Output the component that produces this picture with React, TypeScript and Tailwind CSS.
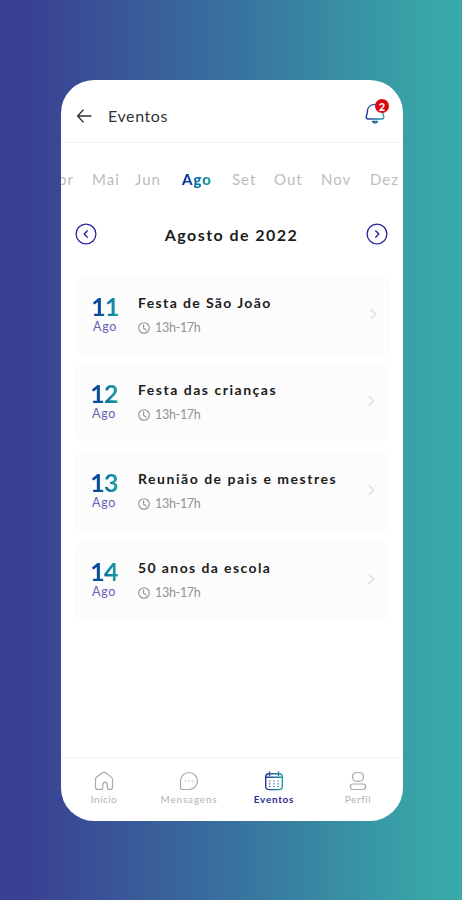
import { useState } from 'react';
import { clsx } from 'clsx';

interface SchoolEvent {
  day: string;
  month: string;
  title: string;
  time: string;
  card: string;
  date: string;
  body: string;
  tracking: string;
}

const months = [
  { name: 'Abr', box: 'w-[13px] justify-end' },
  { name: 'Mai', box: 'ml-[18px] w-[43px]' },
  { name: 'Jun', box: 'w-[47px]' },
  { name: 'Ago', box: 'w-[50px]' },
  { name: 'Set', box: 'w-[42px]' },
  { name: 'Out', box: 'w-[47px]' },
  { name: 'Nov', box: 'w-[49px]' },
  { name: 'Dez', box: 'w-[32px]' },
];

const events: SchoolEvent[] = [
  { day: '11', month: 'Ago', title: 'Festa de São João', time: '13h-17h', card: 'ml-[16px] h-[80px] pt-[17px]', date: 'ml-[12px]', body: 'ml-[18px]', tracking: 'tracking-[1.38px]' },
  { day: '12', month: 'Ago', title: 'Festa das crianças', time: '13h-17h', card: 'ml-[14px] mt-[8px] h-[77px] pt-[16px]', date: 'ml-[13px]', body: 'ml-[19px]', tracking: 'tracking-[1.52px]' },
  { day: '13', month: 'Ago', title: 'Reunião de pais e mestres', time: '13h-17h', card: 'ml-[14px] mt-[11px] h-[80px] pt-[17px]', date: 'ml-[13px]', body: 'ml-[19px]', tracking: 'tracking-[1.53px]' },
  { day: '14', month: 'Ago', title: '50 anos da escola', time: '13h-17h', card: 'ml-[14px] mt-[10px] h-[79px] pt-[16px]', date: 'ml-[13px]', body: 'ml-[19px]', tracking: 'tracking-[1.4px]' },
];

const gradientText = 'bg-linear-to-r from-[#17209a] to-[#24a6a0] bg-clip-text text-transparent';

function Gradient({ id }: { id: string }) {
  return (
    <defs>
      <linearGradient id={id} x1="0" y1="0" x2="20" y2="0" gradientUnits="userSpaceOnUse">
        <stop offset="0" stopColor="#252b98" />
        <stop offset="1" stopColor="#25aaa2" />
      </linearGradient>
    </defs>
  );
}

function BackIcon() {
  return (
    <svg width="16" height="16" viewBox="0 0 16 16" fill="none" stroke="#333" strokeWidth="1.3" strokeLinecap="round" strokeLinejoin="round">
      <path d="M7.2 2 1.6 8l5.6 6M1.8 8H15" />
    </svg>
  );
}

function BellIcon() {
  return (
    <svg width="20" height="22" viewBox="0 0 20 22" fill="none" stroke="url(#bell)" strokeWidth="1.4" strokeLinecap="round" strokeLinejoin="round">
      <Gradient id="bell" />
      <path d="M3.3 17C1.3 17 .8 15.2 1.4 13.6c.7-1.600 1-2.100 1-3.800C2.400 5.300 5.500 2.400 10 2.400s7.600 2.900 7.600 7.400c0 1.700.3 2.200 1 3.800.6 1.600.1 3.400-1.900 3.400Z" />
      <path d="M7.500 19.400c.5 1 1.400 1.600 2.500 1.600s2-.6 2.500-1.600Z" />
    </svg>
  );
}

function CircleChevron({ flip }: { flip?: boolean }) {
  return (
    <svg width="22" height="22" viewBox="0 0 22 22" fill="none" stroke="#29259c" strokeWidth="1.3" strokeLinecap="round" strokeLinejoin="round" className={clsx(flip && 'rotate-180')}>
      <circle cx="11" cy="11" r="9.9" />
      <path d="M12.3 7.800 9.200 11l3.100 3.200" />
    </svg>
  );
}

function ClockIcon() {
  return (
    <svg width="12" height="12" viewBox="0 0 12 12" fill="none" stroke="#929292" strokeWidth="1.1" strokeLinecap="round" strokeLinejoin="round">
      <circle cx="6" cy="6" r="5.3" />
      <path d="M5.600 2.900v3.300l2.600 1.900" />
    </svg>
  );
}

function ChevronIcon() {
  return (
    <svg width="7" height="12" viewBox="0 0 7 12" fill="none" stroke="#dcdcdc" strokeWidth="1.2" strokeLinecap="round" strokeLinejoin="round">
      <path d="M1 1.500 5.700 6 1 10.500" />
    </svg>
  );
}

function HomeIcon() {
  return (
    <svg width="20" height="20" viewBox="0 0 20 20" fill="none" stroke="#a9a9a9" strokeWidth="1.2" strokeLinejoin="round">
      <path d="M1.500 8.400c0-1 .4-1.700 1.200-2.300l5.700-4.400c1-.8 2.200-.8 3.200 0l5.700 4.400c.8.6 1.200 1.300 1.200 2.300v7.800c0 1.400-.8 2.200-2.200 2.200h-1.700c-.9 0-1.300-.4-1.300-1.300v-2.700c0-2.200-.9-3.300-2.300-3.300s-2.300 1.100-2.300 3.300v2.700c0 .9-.4 1.300-1.300 1.300H3.700c-1.400 0-2.200-.8-2.200-2.200Z" />
    </svg>
  );
}

function ChatIcon() {
  return (
    <svg width="20" height="20" viewBox="0 0 20 20" fill="none" stroke="#a9a9a9" strokeWidth="1.2" strokeLinejoin="round">
      <path d="M10 1.500a8.500 8.500 0 1 1 0 17H3.300c-1.200 0-1.800-.6-1.800-1.800V10A8.500 8.500 0 0 1 10 1.500Z" />
      <path d="M6.200 10h.5M9.800 10h.5M13.400 10h.5" strokeLinecap="round" />
    </svg>
  );
}

function CalendarIcon() {
  return (
    <svg width="20" height="20" viewBox="0 0 20 20" fill="none" stroke="url(#calendar)" strokeWidth="1.4" strokeLinecap="round" strokeLinejoin="round">
      <Gradient id="calendar" />
      <rect x="1.7" y="2.7" width="16.6" height="15.9" rx="3.3" />
      <path d="M2 6.300h16M5.500 1v3.500M14.500 1v3.500" />
      <path d="M5.500 10h.5M9.700 10h.5M14 10h.5M5.500 12.800h.5M9.700 12.800h.5M14 12.800h.5M5.500 15.500h.5M9.700 15.500h.5M14 15.500h.5" strokeWidth="1.2" />
    </svg>
  );
}

function ProfileIcon() {
  return (
    <svg width="20" height="20" viewBox="0 0 20 20" fill="none" stroke="#a9a9a9" strokeWidth="1.2">
      <rect x="4.5" y="1.5" width="11" height="8.8" rx="4.4" />
      <rect x="2.3" y="13" width="15.4" height="5.5" rx="2.7" />
    </svg>
  );
}

const tabs = [
  { label: 'Início', icon: HomeIcon, box: 'w-[86px]', tracking: 'tracking-[0.5px]' },
  { label: 'Mensagens', icon: ChatIcon, box: 'w-[84px]', tracking: 'tracking-[0.8px]' },
  { label: 'Eventos', icon: CalendarIcon, box: 'w-[86px]', tracking: 'tracking-[0.7px]' },
  { label: 'Perfil', icon: ProfileIcon, box: 'w-[82px]', tracking: 'tracking-[0.6px]' },
];

function EventCard({ event }: { event: SchoolEvent }) {
  return (
    <div className={clsx('flex w-[313px] items-start rounded-lg border border-[#fafafa] bg-[#fcfcfc]', event.card)}>
      <div className={clsx('flex w-[30px] flex-col items-center', event.date)}>
        <span className={clsx('text-[25px] leading-[25px] font-bold tracking-[-0.8px]', gradientText)}>{event.day}</span>
        <span className="mt-[2px] text-[12.5px] leading-[12px] tracking-[0.7px] text-[#6661b4]">{event.month}</span>
      </div>
      <div className={clsx('flex flex-1 flex-col', event.body)}>
        <span className={clsx('text-[14px] leading-[18px] font-bold whitespace-nowrap text-[#1c1c1c]', event.tracking)}>{event.title}</span>
        <div className="mt-[8px] flex items-center gap-[5px]">
          <ClockIcon />
          <span className="text-[12.5px] leading-[16px] tracking-[-0.3px] text-[#929292]">{event.time}</span>
        </div>
      </div>
      <div className="mt-[14px] mr-[12px]">
        <ChevronIcon />
      </div>
    </div>
  );
}

export default function App() {
  const [activeMonth, setActiveMonth] = useState('Ago');
  const [activeTab, setActiveTab] = useState('Eventos');

  return (
    <div className="flex h-[900px] w-[462px] justify-center bg-linear-to-r/srgb from-[#3a4093] from-5% via-[#38739f] via-52% to-[#38a9a8] to-95% pt-[80px] font-['Lato',sans-serif]">
      <div className="mr-[-2px] flex h-[741px] w-[342px] flex-col overflow-hidden rounded-[33px] bg-white">
        {/* Header */}
        <header className="flex h-[63px] shrink-0 items-center border-b border-[#f3f3f3] pt-[10px] pl-[15px]">
          <BackIcon />
          <h1 className="ml-[16px] text-[16px] tracking-[0.6px] text-[#333]">Eventos</h1>
          <div className="relative mr-[18px] mb-[6px] ml-auto">
            <BellIcon />
            <span className="absolute -top-[3px] left-[10px] flex size-[14px] items-center justify-center rounded-full bg-[#d90912] text-[11px] leading-none font-black text-white">2</span>
          </div>
        </header>

        {/* Months */}
        <div className="flex h-[73px] shrink-0 items-center overflow-hidden">
          {months.map(({ name, box }) => (
            <button
              key={name}
              onClick={() => setActiveMonth(name)}
              className={clsx('flex shrink-0 text-[15px] tracking-[1px]', box)}
            >
              <span className={activeMonth === name ? clsx('font-black', gradientText) : 'text-[#bdbdbd]'}>{name}</span>
            </button>
          ))}
        </div>

        <div className="flex h-[36px] shrink-0 items-center justify-between pr-[15px] pl-[14px]">
          <CircleChevron />
          <h2 className="pt-px text-[16px] font-bold tracking-[1.45px] text-[#1c1c1c]">Agosto de 2022</h2>
          <CircleChevron flip />
        </div>

        {/* Events */}
        <div className="mt-[24px] flex flex-1 flex-col">
          {events.map((event) => (
            <EventCard key={event.day} event={event} />
          ))}
        </div>

        {/* Bottom navigation */}
        <nav className="flex h-[64px] shrink-0 border-t-2 border-[#f8f8f8] pt-[12px]">
          {tabs.map(({ label, icon: Icon, box, tracking }) => (
            <button
              key={label}
              onClick={() => setActiveTab(label)}
              className={clsx('flex shrink-0 flex-col items-center', box)}
            >
              <Icon />
              <span className={clsx('mt-[2px] text-[10px] leading-[12px]', tracking, activeTab === label ? 'font-bold text-[#302c91]' : 'text-[#b3b3b3]')}>{label}</span>
            </button>
          ))}
        </nav>
      </div>
    </div>
  );
}
